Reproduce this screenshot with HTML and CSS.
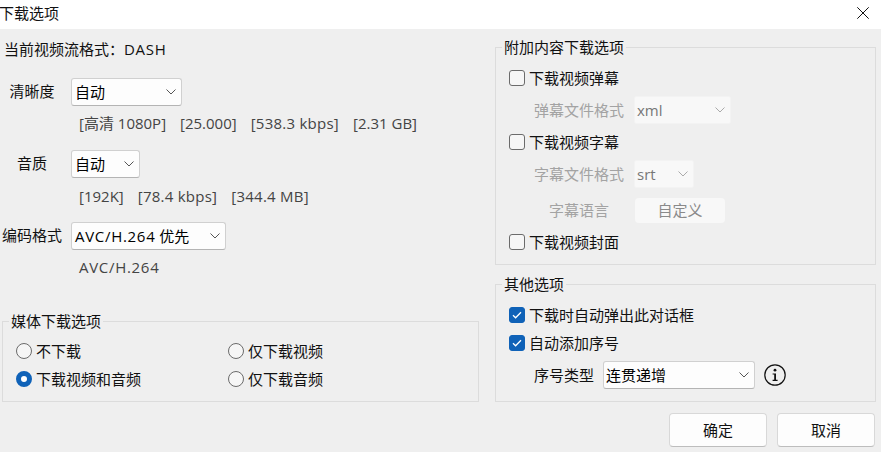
FILE: index.html
```html
<!DOCTYPE html>
<html lang="zh-CN">
<head>
<meta charset="utf-8">
<title>下载选项</title>
<link rel="stylesheet" href="styles.css">
</head>
<body>
<svg class="defs" width="0" height="0" aria-hidden="true">
  <symbol id="chev" viewBox="0 0 10 6"><path d="M.5.5 5 5 9.5.5" fill="none" stroke="currentColor" stroke-width="1"/></symbol>
  <symbol id="tick" viewBox="0 0 10 8"><path d="M1 4.2 3.6 6.8 9 1.2" fill="none" stroke="#fff" stroke-width="1.3"/></symbol>
</svg>
<header class="titlebar">
  <span class="title">下载选项</span>
  <svg class="close" viewBox="0 0 12 12"><path d="M.3.3 11.7 11.7M11.7.3.3 11.7" fill="none" stroke="#111" stroke-width="1"/></svg>
</header>
<main class="body">
  <section class="left">
    <div class="status">当前视频流格式：<span class="caps">DASH</span></div>
    <div class="row row-q">
      <span class="lbl">清晰度</span>
      <div class="select w111"><span>自动</span><svg class="chev"><use href="#chev"/></svg></div>
    </div>
    <div class="info info-q"><span>[高清 1080P]</span><span>[25.000]</span><span class="wide">[538.3 kbps]</span><span>[2.31 GB]</span></div>
    <div class="row row-a">
      <span class="lbl">音质</span>
      <div class="select w69"><span>自动</span><svg class="chev"><use href="#chev"/></svg></div>
    </div>
    <div class="info info-a"><span>[192K]</span><span class="wide">[78.4 kbps]</span><span class="wide">[344.4 MB]</span></div>
    <div class="row row-c">
      <span class="lbl">编码格式</span>
      <div class="select w155"><span><span class="caps">AVC/H.264</span> 优先</span><svg class="chev"><use href="#chev"/></svg></div>
    </div>
    <div class="info info-c"><span class="caps">AVC/H.264</span></div>
    <fieldset class="group media">
      <legend>媒体下载选项</legend>
      <div class="radios">
        <div class="opt"><i class="radio"></i>不下载</div>
        <div class="opt"><i class="radio"></i>仅下载视频</div>
        <div class="opt"><i class="radio on"></i>下载视频和音频</div>
        <div class="opt"><i class="radio"></i>仅下载音频</div>
      </div>
    </fieldset>
  </section>
  <section class="right">
    <fieldset class="group extra">
      <legend>附加内容下载选项</legend>
      <div class="opt"><i class="check"></i>下载视频弹幕</div>
      <div class="sub">
        <span class="sublbl">弹幕文件格式</span>
        <div class="select off w97"><span>xml</span><svg class="chev"><use href="#chev"/></svg></div>
      </div>
      <div class="opt"><i class="check"></i>下载视频字幕</div>
      <div class="sub">
        <span class="sublbl">字幕文件格式</span>
        <div class="select off w60"><span>srt</span><svg class="chev"><use href="#chev"/></svg></div>
      </div>
      <div class="sub sub-lang">
        <span class="sublbl">字幕语言</span>
        <div class="btn-off">自定义</div>
      </div>
      <div class="opt"><i class="check"></i>下载视频封面</div>
    </fieldset>
    <fieldset class="group other">
      <legend>其他选项</legend>
      <div class="opt"><i class="check on"><svg class="tick"><use href="#tick"/></svg></i>下载时自动弹出此对话框</div>
      <div class="opt"><i class="check on"><svg class="tick"><use href="#tick"/></svg></i>自动添加序号</div>
      <div class="seq">
        <span class="seqlbl">序号类型</span>
        <div class="select seqsel w152"><span>连贯递增</span><svg class="chev"><use href="#chev"/></svg></div>
        <svg class="infoicon" viewBox="0 0 22 22"><circle cx="11" cy="11" r="10.2" fill="none" stroke="#111" stroke-width="1.2"/><circle cx="11" cy="6.2" r="1.4" fill="#111"/><path d="M8.6 9.4H12V15.8H13.6V17H8.6V15.8H10.2V10.6H8.6Z" fill="#111"/></svg>
      </div>
    </fieldset>
    <footer class="actions">
      <div class="btn">确定</div>
      <div class="btn">取消</div>
    </footer>
  </section>
</main>
</body>
</html>
```
FILE: styles.css
```css
* { box-sizing: border-box; }
html, body { margin: 0; height: 100%; }
body {
  width: 881px;
  height: 452px;
  overflow: hidden;
  background: #efefef;
  color: #111;
  font: 15px/20px "Open Sans", "Noto Sans CJK SC", sans-serif;
}
.defs { display: block; height: 0; }
.titlebar {
  height: 29px;
  background: #fff;
  display: flex;
  align-items: center;
  justify-content: space-between;
  padding: 0 12px 3px 0;
}
.title { margin-left: -1px; }
.close { width: 12px; height: 12px; }
.body {
  display: flex;
  padding: 8px 5px 0 2px;
  height: 423px;
}
.left { width: 477px; margin-right: 16px; }
.right { width: 381px; }
.status { margin: 2px 0 0 2px; }
.caps { letter-spacing: .7px; }
.wide { letter-spacing: .25px; }
.row { display: flex; align-items: center; height: 28px; }
.row-q { margin-top: 19px; }
.row-a { margin-top: 17px; }
.row-c { margin-top: 16px; }
.lbl { width: 60px; margin-right: 9px; padding-bottom: 2px; text-align: center; }
.select {
  height: 28px;
  display: flex;
  align-items: center;
  justify-content: space-between;
  padding: 0 5px 0 3px;
  background: #fdfdfd;
  border: 1px solid #d0d0d0;
  border-bottom-color: #b4b4b4;
  border-radius: 3px;
  color: #000;
}
.chev { width: 10px; height: 6px; color: #555; flex: none; }
.w111 { width: 111px; }
.w69 { width: 69px; }
.w155 { width: 155px; }
.w97 { width: 97px; }
.w60 { width: 60px; }
.w152 { width: 152px; }
.seqsel { padding-left: 2px; }
.info { display: flex; gap: 14px; padding-left: 77px; color: #444; }
.info-q { margin-top: 7px; }
.info-a { margin-top: 8px; }
.info-c { margin-top: 7px; }
.group {
  margin: 0;
  padding: 0 13px;
  border: 1px solid #dcdcdc;
  min-width: 0;
}
.group legend {
  padding: 0 2px;
  margin-left: -7px;
  line-height: 20px;
}
.media { margin-top: 34px; padding-top: 6px; padding-bottom: 8px; }
.radios { display: grid; grid-template-columns: 212px 1fr; }
.opt { display: flex; align-items: center; height: 28px; }
.radio {
  width: 16px;
  height: 16px;
  margin-right: 4px;
  border: 1px solid #6b6b6b;
  border-radius: 50%;
  background: #f6f6f6;
  flex: none;
}
.radio.on { border: 5px solid #0f62b8; background: #fff; }
.check {
  width: 16px;
  height: 16px;
  margin-right: 4px;
  border: 1px solid #6b6b6b;
  border-radius: 3px;
  background: #f6f6f6;
  flex: none;
  display: flex;
  align-items: center;
  justify-content: center;
}
.check.on { background: #0f62b8; border-color: #0f62b8; }
.tick { width: 10px; height: 8px; }
.extra { padding-top: 7px; padding-bottom: 8px; }
.sub { display: flex; align-items: center; height: 28px; margin: 4px 0 4px 25px; }
.sub-lang { margin-top: 8px; margin-bottom: 4px; }
.sublbl { width: 90px; margin-right: 10px; text-align: center; color: #a3a3a3; }
.select.off { background: #f8f8f8; border-color: #f3f3f3; color: #777; border-radius: 2px; padding-left: 2px; }
.select.off .chev { color: #aaa; }
.btn-off {
  width: 90px;
  height: 25px;
  line-height: 24px;
  text-align: center;
  background: #f8f8f8;
  border-radius: 4px;
  color: #8a8a8a;
}
.sub-lang .btn-off { margin-left: 1px; }
.other { margin-top: 9px; padding-top: 7px; padding-bottom: 12px; }
.seq { display: flex; align-items: center; height: 28px; margin-top: 4px; }
.seqlbl { margin: 0 9px 0 25px; }
.infoicon { width: 22px; height: 22px; margin-left: 9px; }
.actions { display: flex; justify-content: flex-end; gap: 10px; margin-top: 11px; padding-right: 1px; }
.btn {
  width: 98px;
  height: 34px;
  line-height: 33px;
  text-align: center;
  background: #fdfdfd;
  border: 1px solid #d8d8d8;
  border-bottom-color: #bdbdbd;
  border-radius: 4px;
}
```
